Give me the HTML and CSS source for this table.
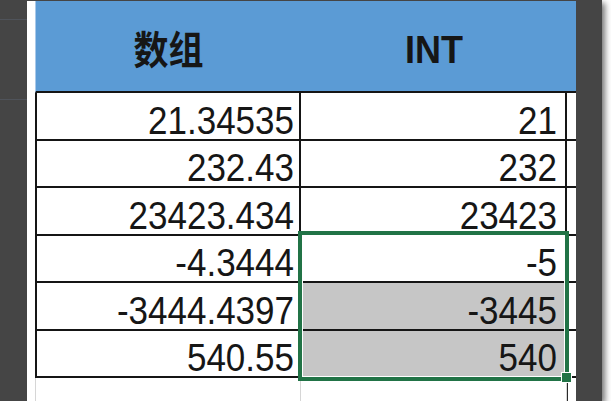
FILE: index.html
```html
<!DOCTYPE html>
<html lang="zh">
<head>
<meta charset="utf-8">
<title>INT</title>
<link rel="stylesheet" href="styles.css">
</head>
<body>
<div class="frame">
  <div class="rail"><span class="rail-line one"></span><span class="rail-line two"></span></div>
  <div class="sheet">
    <div class="grid">
      <div class="hd c1"><span class="txt">数组</span></div>
      <div class="hd c2"><span class="txt">INT</span></div>
      <div class="hd c3"></div>

      <div class="cell c1"><span class="txt">21.34535</span></div><div class="cell c2"><span class="txt">21</span></div><div class="cell c3"></div>
      <div class="cell c1"><span class="txt">232.43</span></div><div class="cell c2"><span class="txt">232</span></div><div class="cell c3"></div>
      <div class="cell c1"><span class="txt">23423.434</span></div><div class="cell c2"><span class="txt">23423</span></div><div class="cell c3"></div>
      <div class="cell c1"><span class="txt">-4.3444</span></div><div class="cell c2"><span class="txt">-5</span></div><div class="cell c3"></div>
      <div class="cell c1"><span class="txt">-3444.4397</span></div><div class="cell c2 sel"><span class="txt">-3445</span></div><div class="cell c3"></div>
      <div class="cell c1"><span class="txt">540.55</span></div><div class="cell c2 sel"><span class="txt">540</span></div><div class="cell c3"></div>

      <div class="blank c1"></div><div class="blank c2"></div><div class="blank c3"></div>
    </div>
    <div class="selection"></div>
    <div class="handle"></div>
    <div class="cursor-line"></div>
  </div>
</div>
</body>
</html>
```

FILE: styles.css
```css
* { box-sizing: border-box; }

html, body {
  margin: 0;
  padding: 0;
  background: #ffffff;
}

.frame {
  width: 602px;
  height: 401px;
  background: #454545;
  display: flex;
  box-shadow: 3px 3px 6px rgba(0, 0, 0, 0.55);
  overflow: hidden;
}

.rail {
  width: 27px;
  flex: none;
  position: relative;
}

.rail-line {
  position: absolute;
  left: 0;
  width: 27px;
  height: 1px;
  background: #4f535a;
}
.rail-line.one { top: 19px; }
.rail-line.two { top: 99px; }

.sheet {
  width: 549px;
  flex: none;
  margin-top: 1px;
  background: #ffffff;
  padding-left: 8px;
  position: relative;
}

.grid {
  display: grid;
  grid-template-columns: 266px 266px 9px;
  grid-template-rows: 92px repeat(6, 47.5px) 24px;
  font-family: "Liberation Sans", Arial, "Noto Sans CJK SC", sans-serif;
  color: #161616;
}

.txt {
  display: inline-block;
  transform: scaleY(1.1);
}

.hd {
  background: #5b9bd5;
  border-bottom: 2px solid #151515;
  display: flex;
  align-items: center;
  justify-content: center;
  font-weight: bold;
  font-size: 36px;
  line-height: 40px;
  padding-top: 8px;
}
.hd.c1 {
  border-left: 1px solid #a9c9ea;
  font-family: "Noto Sans CJK SC", "Liberation Sans", sans-serif;
  font-size: 35px;
  padding-top: 2px;
}

.cell {
  border-bottom: 2px solid #151515;
  display: flex;
  align-items: flex-end;
  justify-content: flex-end;
  font-size: 35px;
  line-height: 34px;
  white-space: nowrap;
}
.cell .txt { transform-origin: 50% 75%; }
.cell.c1 {
  border-left: 2px solid #151515;
  border-right: 2px solid #151515;
  padding-right: 5px;
}
.cell.c2 {
  border-right: 2px solid #151515;
  padding-right: 8px;
}
.cell.sel { background: #c6c6c6; }

.blank.c1 {
  border-left: 1px solid #d6d6d6;
  border-right: 1px solid #d6d6d6;
}
.blank.c2 { border-right: 1px solid #d6d6d6; }

.selection {
  position: absolute;
  left: 271px;
  top: 230px;
  width: 271px;
  height: 150px;
  border: 4px solid #217346;
  box-shadow: inset 0 0 0 1px #ffffff;
}

.handle {
  position: absolute;
  left: 534px;
  top: 371px;
  width: 11px;
  height: 11px;
  background: #217346;
  border: 1px solid #ffffff;
}

.cursor-line {
  position: absolute;
  left: 540px;
  top: 382px;
  width: 1px;
  height: 20px;
  background: #2a2a2a;
}
```
